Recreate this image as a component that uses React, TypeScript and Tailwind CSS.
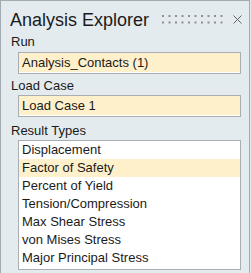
import React from "react";

const items = [
  "Displacement",
  "Factor of Safety",
  "Percent of Yield",
  "Tension/Compression",
  "Max Shear Stress",
  "von Mises Stress",
  "Major Principal Stress",
];

function Grip() {
  const dots: React.ReactNode[] = [];
  for (let i = 0; i < 10; i++) {
    dots.push(<rect key={"a" + i} x={i * 6.5} y={0} width={2} height={2} fill="#8b9096" />);
    dots.push(<rect key={"b" + i} x={i * 6.5} y={6.5} width={2} height={2} fill="#8b9096" />);
  }
  return (
    <svg width="62" height="9" viewBox="0 0 62 9" className="absolute left-[161px] top-[13.5px]">
      {dots}
    </svg>
  );
}

function CloseIcon() {
  return (
    <svg width="9" height="9" viewBox="0 0 9 9" className="absolute left-[231.5px] top-[14px]">
      <path d="M0.5 0.5 L8.5 8.5 M8.5 0.5 L0.5 8.5" stroke="#5e6368" strokeWidth="1" fill="none" />
    </svg>
  );
}

export default function App() {
  return (
    <div className="w-[251px] h-[273px] bg-[#e4ebef] overflow-hidden">
      <div
        className="relative w-[250px] h-[273px] bg-[#e4ebef] border-l border-t border-r border-[#a3abb2] text-[#1a1a1a] flex flex-col"
        style={{ fontFamily: '"Liberation Sans", Arial, sans-serif' }}
      >
        <div className="ml-[9px] mt-[8px] text-[18px] leading-[22px] text-[#1a1a1a]">Analysis Explorer</div>
        <Grip />
        <CloseIcon />

        <div className="ml-[10px] mt-[3px] text-[13px] leading-[16px]">Run</div>
        <div className="ml-[17px] mt-[2px] w-[223px] h-[22px] border border-[#a9aeb3] bg-[#fff0cc] shadow-[inset_0_-1px_0_#ffffff] pl-[3px] text-[13px] leading-[20px]">
          Analysis_Contacts (1)
        </div>

        <div className="ml-[10px] mt-[4px] text-[13px] leading-[16px]">Load Case</div>
        <div className="ml-[17px] mt-[1px] w-[223px] h-[22px] border border-[#a9aeb3] bg-[#fff0cc] shadow-[inset_0_-1px_0_#ffffff] pl-[3px] text-[13px] leading-[20px]">
          Load Case 1
        </div>

        <div className="ml-[10px] mt-[6px] text-[13px] leading-[16px]">Result Types</div>
        <div className="ml-[17px] mt-[1px] w-[223px] h-[130px] border border-[#a9aeb3] bg-white flex flex-col">
          {items.map((it, i) => (
            <div
              key={it}
              className={
                "h-[18px] pl-[3px] text-[13px] leading-[18px] " + (i === 1 ? "bg-[#fff0cc]" : "")
              }
            >
              {it}
            </div>
          ))}
        </div>
      </div>
    </div>
  );
}
